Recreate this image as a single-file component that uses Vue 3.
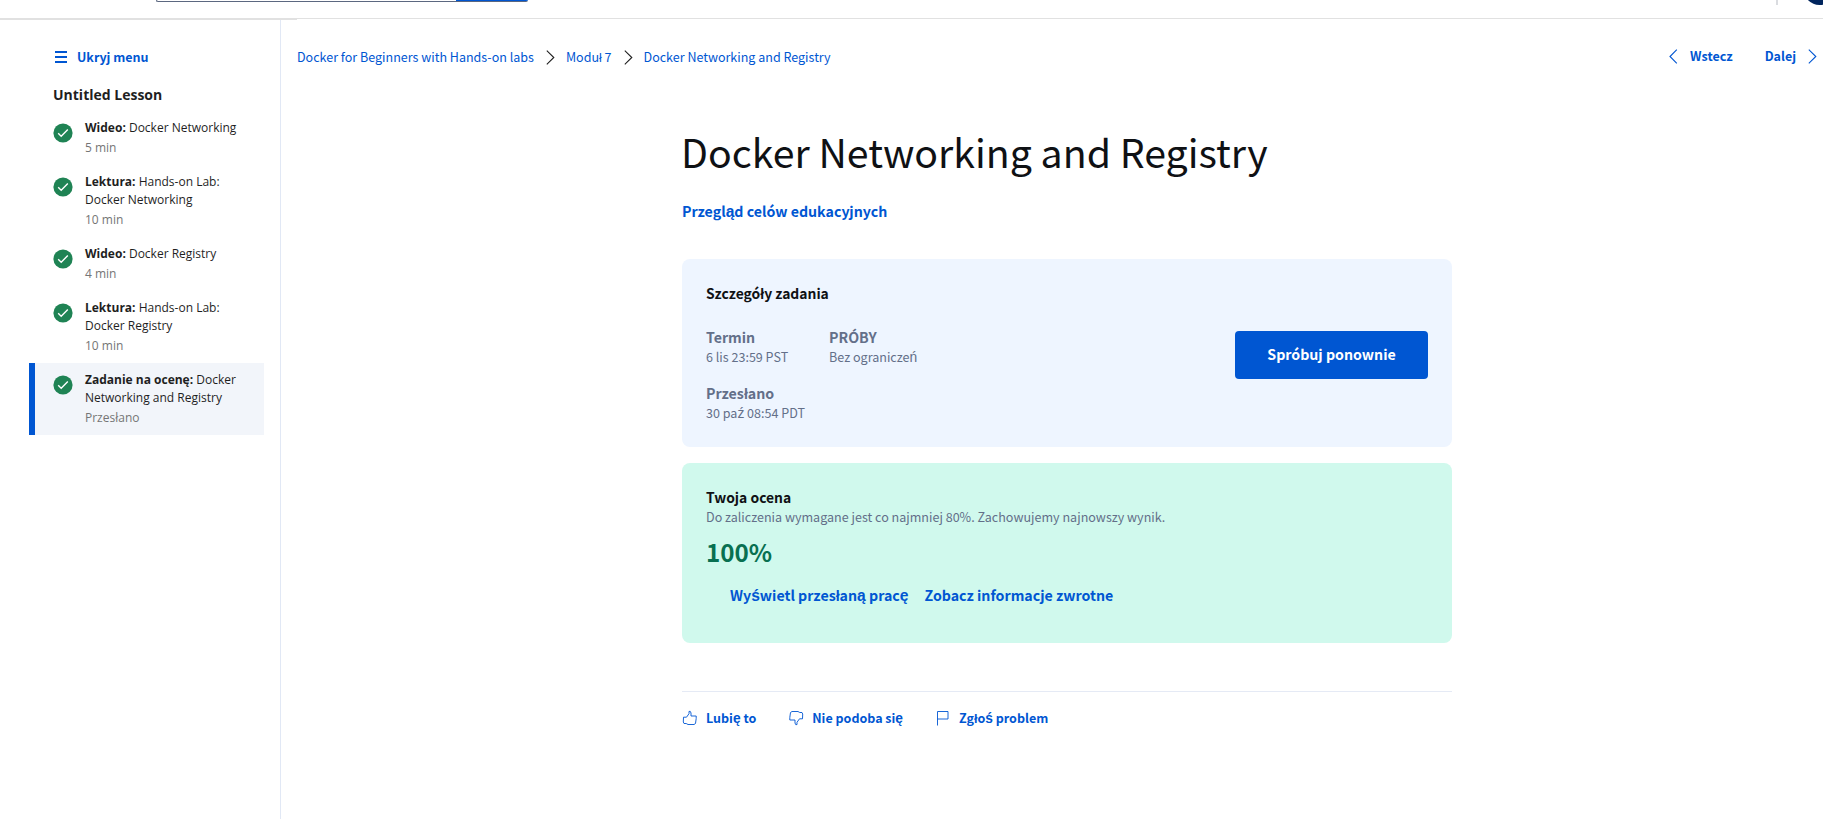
<script setup>
import { h } from 'vue'

const lessons = [
  { kind: 'Wideo:', name: 'Docker Networking', note: '5 min' },
  { kind: 'Lektura:', name: 'Hands-on Lab: Docker Networking', note: '10 min' },
  { kind: 'Wideo:', name: 'Docker Registry', note: '4 min' },
  { kind: 'Lektura:', name: 'Hands-on Lab: Docker Registry', note: '10 min' },
  { kind: 'Zadanie na ocenę:', name: 'Docker Networking and Registry', note: 'Przesłano', active: true },
]

// Polish letters missing from the main face are set in the fallback sans.
const Pl = (props) =>
  h('span', props.t.split(/([śźąęń])/).map((s) => (/^[śźąęń]$/.test(s) ? h('span', { class: 'alt-glyph' }, s) : s)))
Pl.props = ['t']
</script>

<template>
  <div class="page">
    <header class="top">
      <div class="search"><span class="search-button"></span></div>
      <div class="account">
        <i class="rule"></i>
        <svg width="16" height="5" viewBox="0 0 16 5"><circle cx="12.500" cy="-11" r="16" fill="#00255d" /></svg>
      </div>
    </header>
    <div class="body">
      <aside class="side">
        <div class="side-accent"></div>
        <a class="toggle">
          <svg width="12" height="12" viewBox="0 0 12 12"><path d="M0 1h12M0 6h12M0 11h12" stroke="#0056d2" stroke-width="2" /></svg>
          <span class="semi small">Ukryj menu</span>
        </a>
        <h2>Untitled Lesson</h2>
        <ul>
          <li v-for="(l, i) in lessons" :key="i" :class="{ active: l.active }">
            <svg class="check" width="20" height="20" viewBox="0 0 20 20">
              <circle cx="10" cy="10" r="9.6" fill="#1f8354" />
              <path d="M5.2 10.3l3 2.900 6.600-6.600" fill="none" stroke="#fff" stroke-width="1.400" />
            </svg>
            <div class="lesson">
              <p><b>{{ l.kind }}</b> {{ l.name }}</p>
              <p class="note">{{ l.note }}</p>
            </div>
          </li>
        </ul>
      </aside>
      <main>
        <nav>
          <div class="crumbs">
            <a>Docker for Beginners with Hands-on labs</a>
            <svg width="9" height="15" viewBox="0 0 9 15"><path d="M.8.7L7.8 7.500.8 14.300" fill="none" stroke="#1f1f1f" stroke-width="1.100" /></svg>
            <a>Moduł 7</a>
            <svg width="9" height="15" viewBox="0 0 9 15"><path d="M.8.7L7.8 7.500.8 14.300" fill="none" stroke="#1f1f1f" stroke-width="1.100" /></svg>
            <a>Docker Networking and Registry</a>
          </div>
          <div class="pager">
            <svg width="9" height="15" viewBox="0 0 9 15"><path d="M7.800.7L1 7.500l6.800 6.800" fill="none" stroke="#0056d2" stroke-width="1.100" /></svg>
            <a class="semi small prev">Wstecz</a>
            <a class="semi small next">Dalej</a>
            <svg width="9" height="15" viewBox="0 0 9 15"><path d="M.8.7L7.800 7.500.8 14.300" fill="none" stroke="#0056d2" stroke-width="1.100" /></svg>
          </div>
        </nav>
        <section class="content">
          <h1>Docker Networking and Registry</h1>
          <a class="semi goals"><Pl t="Przegląd celów edukacyjnych" /></a>
          <div class="card details">
            <h3>Szczegóły zadania</h3>
            <div class="row">
              <div class="facts">
                <dl><dt class="semi">Termin</dt><dd>6 lis 23:59 PST</dd></dl>
                <dl><dt class="semi">PRÓBY</dt><dd><Pl t="Bez ograniczeń" /></dd></dl>
                <dl><dt class="semi">Przesłano</dt><dd><Pl t="30 paź 08:54 PDT" /></dd></dl>
              </div>
              <button class="semi">Spróbuj ponownie</button>
            </div>
          </div>
          <div class="card grade">
            <h3>Twoja ocena</h3>
            <p class="rule-text">Do zaliczenia wymagane jest co najmniej 80%. Zachowujemy najnowszy wynik.</p>
            <div class="score">100%</div>
            <div class="links">
              <a class="semi"><Pl t="Wyświetl przesłaną pracę" /></a>
              <a class="semi">Zobacz informacje zwrotne</a>
            </div>
          </div>
          <footer>
            <a>
              <svg width="16" height="16" viewBox="0 0 16 16"><path d="M1.500 7.200h3L7 3.700V1.400h1.300L9 3v3h5.200v2.500l-.7 5L12 14.500H6L4.200 13.500H2L1.300 12z" /></svg>
              <span class="semi small"><Pl t="Lubię to" /></span>
            </a>
            <a>
              <svg width="16" height="16" viewBox="0 0 16 16"><path d="M14.500 8.800h-3L9 12.300v2.300H7.700L7 13v-3H1.800V7.500l.7-5L4 1.500h6l1.800 1H14l.7 1.500z" /></svg>
              <span class="semi small"><Pl t="Nie podoba się" /></span>
            </a>
            <a>
              <svg width="16" height="16" viewBox="0 0 16 16"><path d="M2.500 15.500v-14h10.500v7.500H2.500" /></svg>
              <span class="semi small"><Pl t="Zgłoś problem" /></span>
            </a>
          </footer>
        </section>
      </main>
    </div>
  </div>
</template>

<style>
body { margin: 0; background: #fff; overflow: hidden; }
.alt-glyph { font-family: "Liberation Sans", Arial, sans-serif; font-size: 1.1em; line-height: 1; }
</style>

<style scoped>
* { box-sizing: border-box; }
h1, h2, h3, p, ul, dl, dd { margin: 0; padding: 0; }
.page { width: 1823px; height: 819px; overflow: hidden; background: #fff; display: flex; flex-direction: column; font: 12.55px/20px "Noto Sans CJK SC", "Liberation Sans", sans-serif; color: #1f1f1f; }
a { color: #0056d2; white-space: nowrap; }
svg { display: block; flex: none; }
.semi { font-weight: 600; font-size: 14.2px; }
.small { font-size: 12.5px; }
.top { height: 19px; flex: none; border-bottom: 1px solid #e1e1e1; display: flex; justify-content: space-between; padding-left: 156px; overflow: hidden; }
.search { width: 372px; height: 2px; border: 1px solid #5b6780; border-top: 0; border-right: 0; border-radius: 0 0 4px 4px; display: flex; justify-content: flex-end; overflow: hidden; }
.search-button { width: 72px; height: 2px; background: #0056d2; flex: none; }
.account { display: flex; height: 5px; }
.rule { width: 2px; height: 5px; background: #dadce0; margin-right: 29px; }
.body { flex: 1; display: flex; min-height: 0; }
.side { width: 281px; flex: none; border-right: 1px solid #e1e8f5; font-family: "Open Sans", sans-serif; font-size: 12px; line-height: 18px; }
.side-accent { height: 1px; width: 297px; background: #e1e1e1; }
.toggle { display: flex; align-items: center; gap: 10px; height: 20px; margin: 27px 0 0 55px; font-family: "Noto Sans CJK SC", "Liberation Sans", sans-serif; }
h2 { font-size: 14px; line-height: 20px; font-weight: 700; margin: 18px 0 6px 53px; }
ul { list-style: none; margin-left: 29px; width: 235px; }
li { display: flex; padding: 8px 0 8px 24px; }
li.active { background: #f2f5fa; border-left: 6px solid #0056d2; padding-left: 18px; }
.check { margin-top: 4px; }
.lesson { margin-left: 12px; width: 155px; }
.note { margin-top: 2px; color: #757575; }
main { flex: 1; min-width: 0; }
nav { display: flex; justify-content: space-between; padding: 28px 6px 0 16px; height: 60px; }
.crumbs, .pager { display: flex; height: 20px; align-items: center; }
.crumbs svg { margin: 0 11px 0 12px; }
.crumbs a { font-size: 12.52px; }
.pager { margin-top: -1px; }
.prev { margin: 0 32px 0 12px; }
.next { margin-right: 12px; }
.content { width: 770px; margin: 42px 0 0 401px; }
h1 { font-weight: 400; font-size: 39.25px; line-height: 60px; color: #0f1114; white-space: nowrap; margin-left: -1px; }
.goals { display: block; margin-top: 20px; height: 20px; }
.card { border-radius: 8px; padding: 24px; }
.details { height: 188px; background: #eef5ff; margin-top: 38px; }
h3 { font-size: 13.9px; font-weight: 600; line-height: 20px; color: #0f1114; }
.row { display: flex; justify-content: space-between; margin-top: 24px; }
.facts { display: grid; grid-template-columns: 123px 123px; gap: 16px 0; color: #636f89; height: 96px; }
dt, dd { line-height: 20px; height: 20px; white-space: nowrap; }
button { width: 193px; height: 48px; margin-top: 4px; border: 0; border-radius: 4px; background: #0056d2; color: #fff; font-family: inherit; padding: 0 0 2px; }
.grade { height: 180px; background: #d0f9ed; margin-top: 16px; }
.rule-text { color: #636f89; white-space: nowrap; }
.score { font-size: 24.2px; font-weight: 600; line-height: 36px; color: #087051; margin-top: 7px; }
.links { display: flex; gap: 16px; margin: 15px 0 0 24px; height: 20px; }
footer { margin-top: 48px; border-top: 1px solid #e5eaf5; padding-top: 16px; display: flex; gap: 32px; }
footer a { display: flex; align-items: center; gap: 8px; height: 20px; }
footer path { fill: none; stroke: #0056d2; stroke-width: .9; stroke-linejoin: round; }
</style>
